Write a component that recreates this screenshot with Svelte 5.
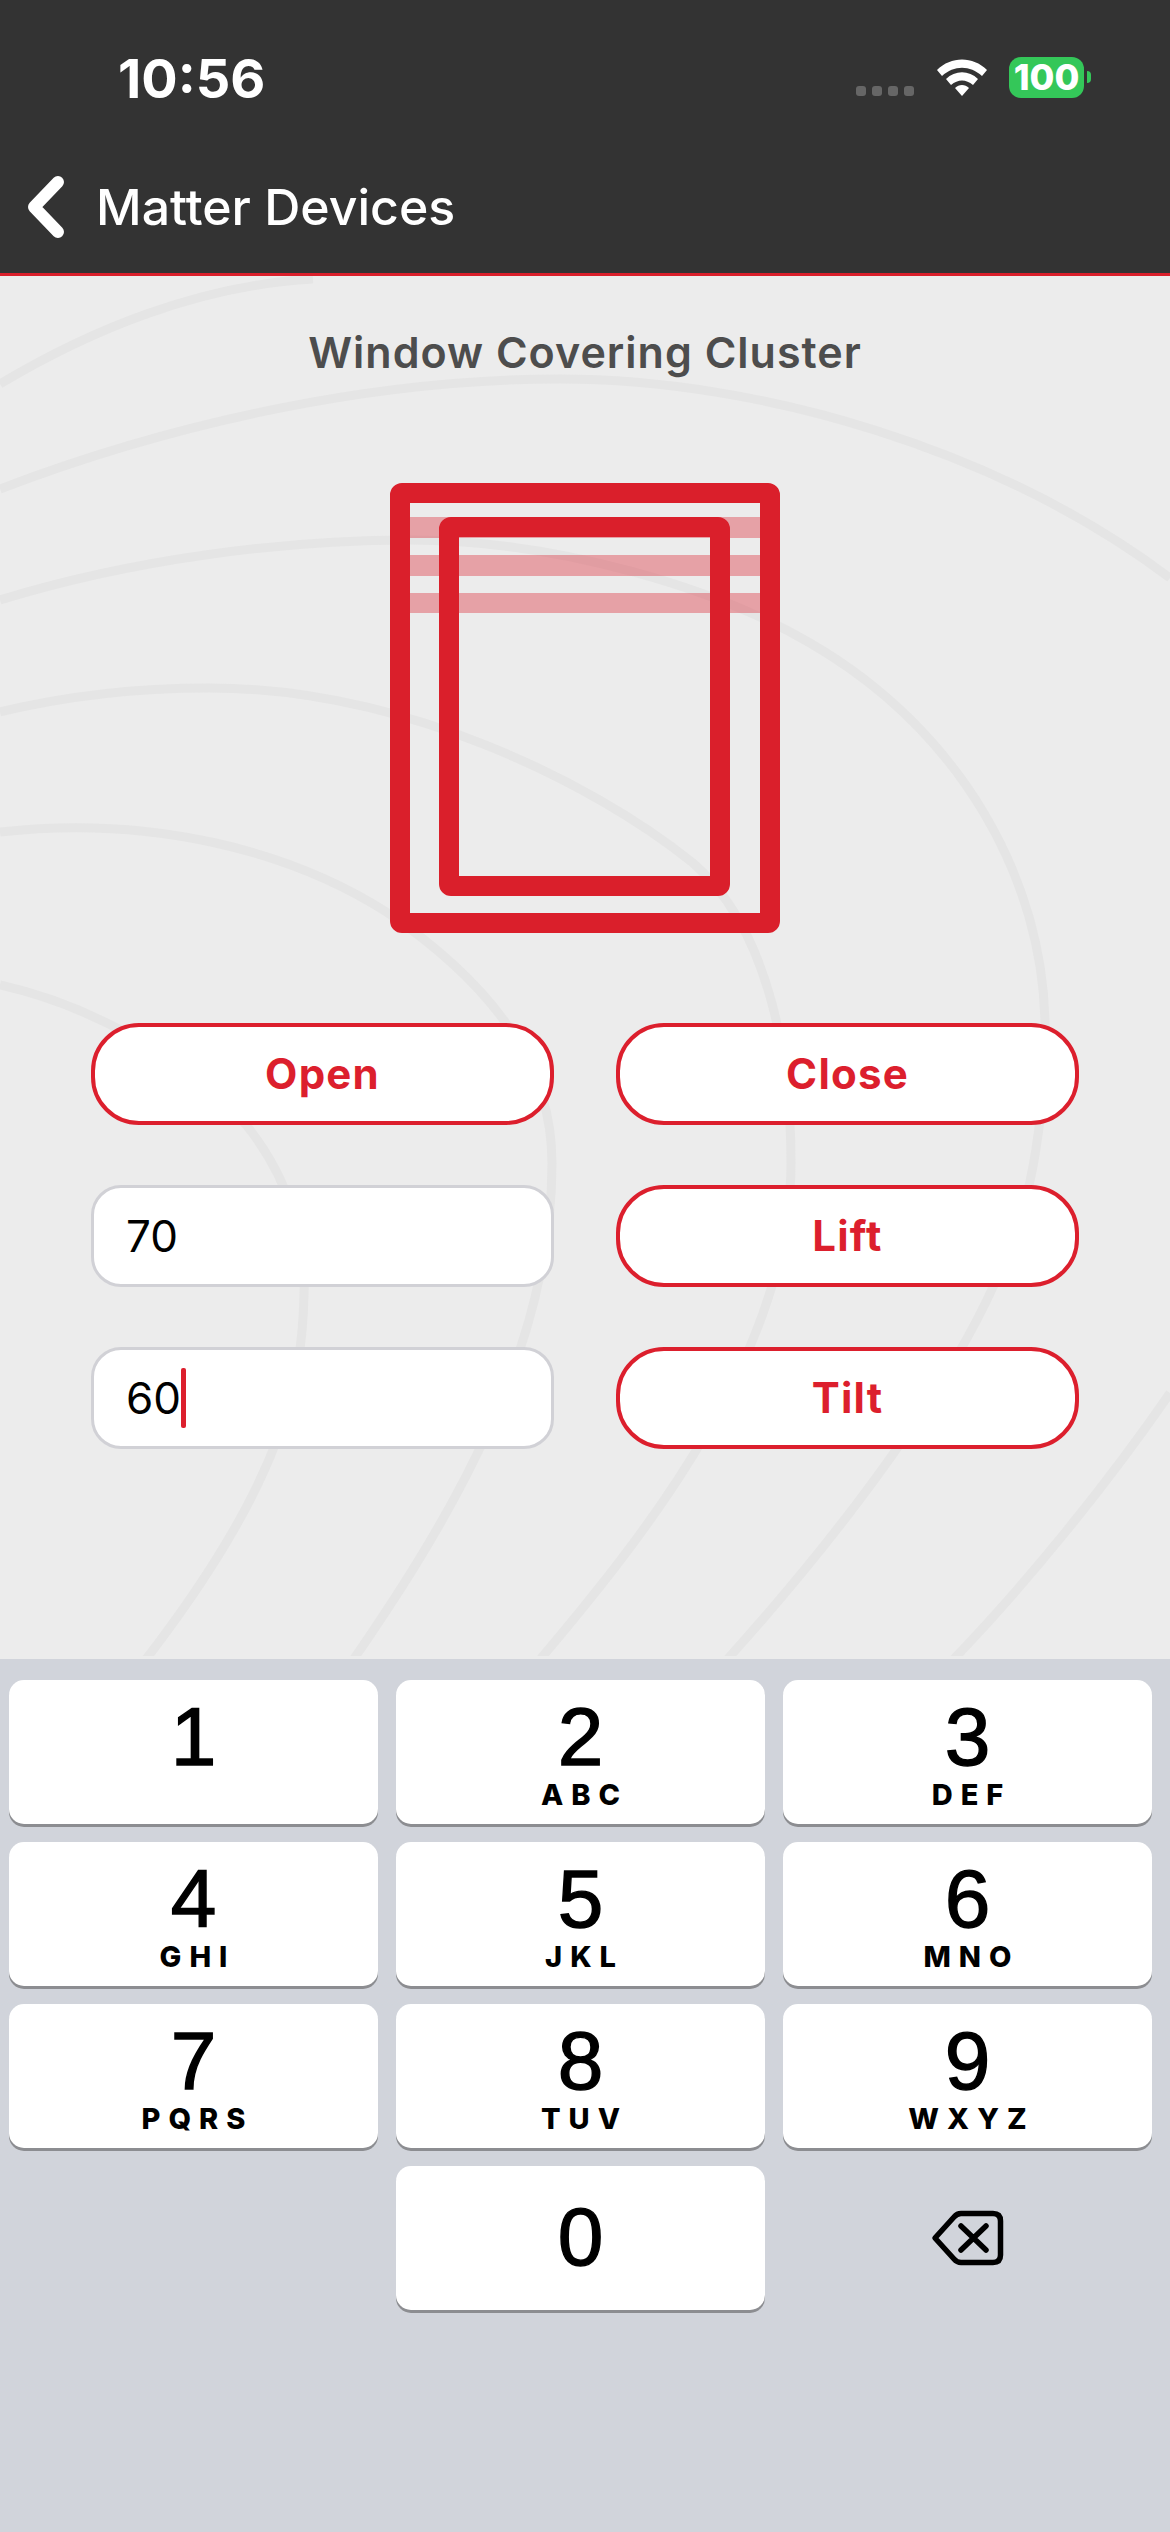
<script>
  const keys = [
    { n: '1', l: '' },
    { n: '2', l: 'ABC' },
    { n: '3', l: 'DEF' },
    { n: '4', l: 'GHI' },
    { n: '5', l: 'JKL' },
    { n: '6', l: 'MNO' },
    { n: '7', l: 'PQRS' },
    { n: '8', l: 'TUV' },
    { n: '9', l: 'WXYZ' }
  ];

  // background rings, traced by hand
  const rings = [
    'M0 384 C90 330 200 285 313 279',
    'M0 489 C180 420 380 379 560 379 C760 379 1000 450 1170 578',
    'M0 600 C130 560 280 540 410 540 C560 540 720 590 810 643 C960 730 1045 880 1045 1029 C1045 1120 1030 1220 993 1287 C960 1360 880 1490 724 1663',
    'M0 712 C70 695 140 688 209 688 C400 688 590 780 693 863 C770 930 791 1060 791 1163 C791 1350 650 1530 537 1663',
    'M0 832 C150 815 290 850 388 913 C500 990 552 1070 552 1163 C552 1350 450 1520 351 1663',
    'M0 985 C90 1005 190 1060 247 1126 C290 1180 306 1240 304 1295 C302 1380 285 1480 143 1663',
    'M1170 1393 C1110 1480 1030 1580 950 1663'
  ];
</script>

<div class="screen">
  <header>
    <div class="status">
      <span class="time">10:56</span>
      <div class="signal">
        <i></i><i></i><i></i><i></i>
      </div>
      <svg class="wifi" width="50" height="37" viewBox="0 0 50 37">
        <path d="M0 11 C14 -3 36 -3 50 11 L45 17 C33 6 17 6 5 17 Z" fill="#fff" />
        <path d="M9 20 C18 11 32 11 41 20 L36 26 C29 20 21 20 14 26 Z" fill="#fff" />
        <path d="M18 29 C22 25 28 25 32 29 L25 37 Z" fill="#fff" />
      </svg>
      <div class="battery">100</div>
      <div class="nub"></div>
    </div>
    <div class="nav">
      <svg width="36" height="62" viewBox="0 0 36 62">
        <path d="M30 6 L6 31 L30 56" fill="none" stroke="#fff" stroke-width="12" stroke-linecap="round" stroke-linejoin="round" />
      </svg>
      <span>Matter Devices</span>
    </div>
  </header>

  <main>
    <svg class="rings" width="1170" height="1380" viewBox="0 276 1170 1380">
      {#each rings as d}
        <path {d} fill="none" stroke="#e5e5e5" stroke-width="9" />
      {/each}
    </svg>

    <h1>Window Covering Cluster</h1>

    <svg class="blind" width="390" height="450" viewBox="0 0 390 450">
      <g fill="#dc1f2d" opacity="0.36">
        <rect x="20" y="34" width="350" height="21" />
        <rect x="20" y="72" width="350" height="21" />
        <rect x="20" y="110" width="350" height="20" />
      </g>
      <rect x="10" y="10" width="370" height="430" rx="2" fill="none" stroke="#da1f2b" stroke-width="20" stroke-linejoin="round" />
      <rect x="59" y="44" width="271" height="359" rx="2" fill="none" stroke="#da1f2b" stroke-width="20" stroke-linejoin="round" />
    </svg>

    <div class="controls">
      <button>Open</button>
      <button>Close</button>
      <div class="field">70</div>
      <button>Lift</button>
      <div class="field">60<span class="caret"></span></div>
      <button>Tilt</button>
    </div>
  </main>

  <div class="keyboard">
    {#each keys as k}
      <div class="key">
        <span class="num">{k.n}</span>
        {#if k.l}<span class="letters">{k.l}</span>{/if}
      </div>
    {/each}
    <div></div>
    <div class="key zero"><span class="num">0</span></div>
    <div class="del">
      <svg width="75" height="64" viewBox="0 0 75 64">
        <path d="M5 32 L24 11 Q27 7.5 31 7.5 L63 7.5 Q70.5 7.5 70.5 15 L70.5 49 Q70.5 56.5 63 56.5 L31 56.5 Q27 56.5 24 53 Z" fill="none" stroke="#000" stroke-width="5.5" stroke-linejoin="round" />
        <path d="M31 20 L56 44 M56 20 L31 44" fill="none" stroke="#000" stroke-width="5.5" stroke-linecap="round" />
      </svg>
    </div>
  </div>
</div>

<style>
  :global(body) {
    margin: 0;
  }

  .screen {
    width: 1170px;
    height: 2532px;
    display: flex;
    flex-direction: column;
    font-family: Inter, "Liberation Sans", sans-serif;
    background: #d1d4db;
    overflow: hidden;
  }

  header {
    height: 273px;
    background: #333333;
    border-bottom: 3px solid #da1f2b;
    color: #fff;
    flex-shrink: 0;
  }

  .status {
    height: 130px;
    display: flex;
    align-items: flex-start;
    padding: 57px 78px 0 118px;
    box-sizing: border-box;
  }

  .time {
    font-size: 54px;
    font-weight: 700;
    line-height: 44px;
    width: 738px;
  }

  .signal {
    display: flex;
    gap: 6px;
    margin-top: 29px;
    width: 81px;
  }

  .signal i {
    width: 10px;
    height: 10px;
    border-radius: 3px;
    background: #666;
  }

  .wifi {
    margin-top: 2px;
    margin-right: 22px;
    flex-shrink: 0;
  }

  .battery {
    width: 75px;
    height: 41px;
    flex-shrink: 0;
    border-radius: 12px;
    background: #34c759;
    font-size: 36px;
    font-weight: 800;
    line-height: 41px;
    text-align: center;
  }

  .nub {
    width: 4px;
    height: 12px;
    margin: 14px 0 0 3px;
    flex-shrink: 0;
    border-radius: 0 6px 6px 0;
    background: #34c759;
  }

  .nav {
    display: flex;
    align-items: center;
    height: 143px;
    padding: 10px 0 0 28px;
    box-sizing: border-box;
    gap: 32px;
  }

  .nav span {
    font-size: 50px;
    font-weight: 500;
  }

  main {
    position: relative;
    flex: 1;
    background: #ececec;
    display: flex;
    flex-direction: column;
    align-items: center;
  }

  .rings {
    position: absolute;
    inset: 0;
  }

  h1 {
    position: relative;
    margin: 53px 0 0;
    height: 46px;
    font-size: 43px;
    line-height: 46px;
    font-weight: 600;
    letter-spacing: 1px;
    color: #4d4d4d;
  }

  .blind {
    position: relative;
    margin-top: 108px;
  }

  .controls {
    position: relative;
    display: grid;
    grid-template-columns: 463px 463px;
    grid-auto-rows: 102px;
    column-gap: 62px;
    row-gap: 60px;
    margin-top: 90px;
  }

  button {
    border: 4px solid #dc1f2d;
    border-radius: 48px;
    background: #fff;
    color: #dc1f2d;
    font-family: inherit;
    font-size: 42px;
    font-weight: 700;
    letter-spacing: 1.2px;
    padding: 0 0 2px;
  }

  .field {
    display: flex;
    align-items: center;
    border: 3px solid #d1d1d6;
    border-radius: 30px;
    background: #fff;
    padding-left: 32px;
    color: #000;
    font-size: 44px;
  }

  .caret {
    width: 5px;
    height: 60px;
    background: #dc1f2d;
    border-radius: 2px;
  }

  .keyboard {
    height: 873px;
    flex-shrink: 0;
    box-sizing: border-box;
    padding: 21px 9px 0;
    display: grid;
    grid-template-columns: repeat(3, 369px);
    grid-auto-rows: 144px;
    gap: 18px;
    color: #000;
  }

  .key {
    position: relative;
    display: flex;
    flex-direction: column;
    align-items: center;
    background: #fff;
    border-radius: 15px;
    box-shadow: 0 3px 0 #8c8d91;
  }

  .num {
    font-size: 82px;
    line-height: 60px;
    margin-top: 27px;
    font-family: "Liberation Sans", sans-serif;
    font-weight: 400;
    -webkit-text-stroke: 1.4px #000;
  }

  .zero .num {
    margin-top: 41px;
  }

  .letters {
    font-size: 29px;
    line-height: 28px;
    font-weight: 800;
    letter-spacing: 8px;
    margin-top: 14px;
    margin-right: -8px;
  }

  .del {
    display: flex;
    align-items: center;
    justify-content: center;
  }
</style>
